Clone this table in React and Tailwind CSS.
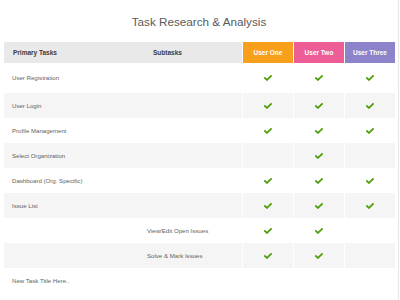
import React from "react";

const rows = [
  { task: "User Registration", sub: "", checks: [1, 1, 1], h: "h-[30px]" },
  { task: "User Login", sub: "", checks: [1, 1, 1] },
  { task: "Profile Management", sub: "", checks: [1, 1, 1] },
  { task: "Select Organization", sub: "", checks: [0, 1, 0] },
  { task: "Dashboard (Org. Specific)", sub: "", checks: [1, 1, 1] },
  { task: "Issue List", sub: "", checks: [1, 1, 1] },
  { task: "", sub: "View/Edit Open Issues", checks: [1, 1, 0] },
  { task: "", sub: "Solve & Mark Issues", checks: [1, 1, 0] },
  { task: "New Task Title Here..", sub: "", checks: [0, 0, 0] },
];

function Check() {
  return (
    <svg width="8" height="6" viewBox="0 0 8 6" fill="none">
      <path d="M1 3.1 L3 4.9 L7 1" stroke="#4f9e0c" strokeWidth="1.8" strokeLinecap="square" />
    </svg>
  );
}

export default function App() {
  return (
    <div className="w-[400px] h-[300px] bg-white overflow-hidden" style={{ fontFamily: '"Liberation Sans", Arial, sans-serif' }}>
      <div className="w-[399px] h-full border-r border-[#e8e8e8]">
        <div className="pt-[15px] text-center text-[11.7px] leading-[14px] text-[#5a5a5a]">Task Research &amp; Analysis</div>
        <div className="mt-[13px] ml-[4px] w-[391px]">
          <div className="flex h-[21px] gap-px text-[6.5px] font-bold leading-[8px]">
            <div className="w-[238px] bg-[#e9e9e9] flex items-center text-[#3a3a3a]">
              <div className="w-[141px] pl-[9px]">Primary Tasks</div>
              <div className="pl-[8px]">Subtasks</div>
            </div>
            <div className="w-[50px] bg-[#f8a01c] text-white flex items-center justify-center">User One</div>
            <div className="w-[50px] bg-[#ee5e96] text-white flex items-center justify-center">User Two</div>
            <div className="w-[50px] bg-[#8b84ca] text-white flex items-center justify-center">User Three</div>
          </div>
          {rows.map((r, i) => {
            const bg = i % 2 === 1 ? "bg-[#f5f5f5]" : "bg-white";
            return (
              <div key={i} className={`flex gap-px ${r.h || "h-[25px]"} text-[6.1px] leading-[8px] text-[#5f5f5f]`}>
                <div className={`w-[238px] ${bg} flex items-center`}>
                  <div className="w-[143px] pl-[8px]">{r.task}</div>
                  <div>{r.sub}</div>
                </div>
                {r.checks.map((c, j) => (
                  <div key={j} className={`w-[50px] ${bg} flex items-center justify-center`}>
                    {c ? <Check /> : null}
                  </div>
                ))}
              </div>
            );
          })}
        </div>
      </div>
    </div>
  );
}
